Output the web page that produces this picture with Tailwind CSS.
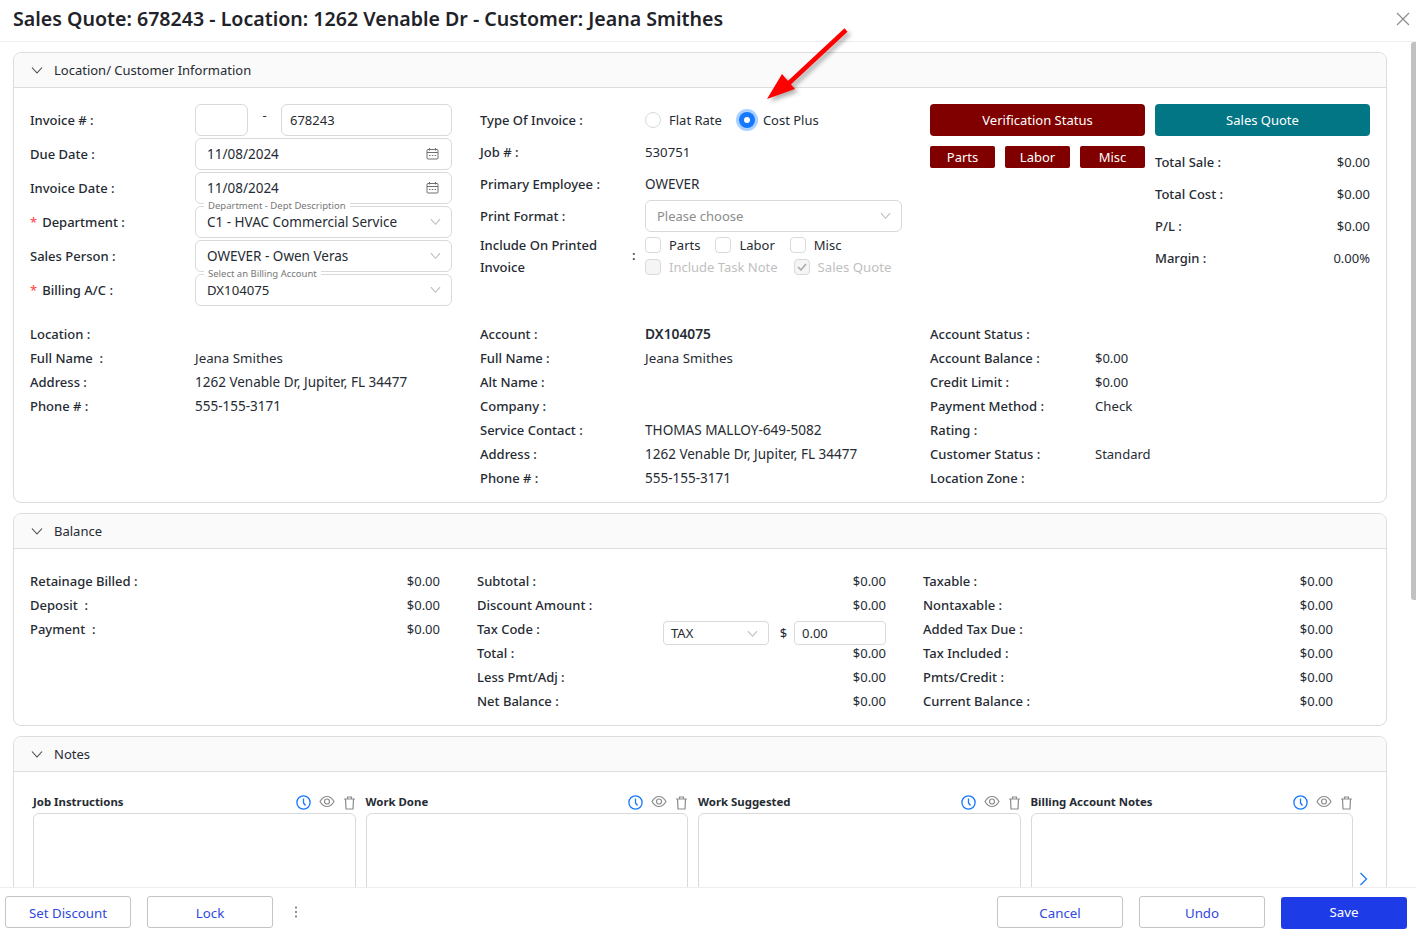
<!doctype html>
<html>

<head>
  <meta charset="UTF-8">
  <script src="https://cdn.jsdelivr.net/npm/@tailwindcss/browser@4"></script>
</head>

<body class="h-screen overflow-hidden bg-white text-[13px] text-[#262b33] font-['Noto_Sans',sans-serif]">
  <div class="relative flex flex-col h-[939px]">

    <!-- title bar -->
    <header class="flex items-center justify-between h-[42px] shrink-0 pl-[13px] pr-[6px] pb-[4px] border-b border-[#eeeeee]">
      <h1 class="text-[19.6px] font-semibold text-[#1f2329]">Sales Quote: 678243 - Location: 1262 Venable Dr - Customer: Jeana Smithes</h1>
      <svg class="w-[14px] h-[14px] text-[#8c8c8c]" viewBox="0 0 14 14" fill="none" stroke="currentColor" stroke-width="1.2"><path d="M1 1l12 12M13 1L1 13" /></svg>
    </header>

    <main class="flex-1 overflow-hidden px-[13px] pt-[10px] w-[1400px] flex flex-col gap-[10px]">

      <!-- location / customer -->
      <section class="shrink-0 h-[451px] border border-[#dddddd] rounded-[8px] overflow-hidden">
        <div class="flex items-center gap-[11px] h-[35px] pl-[17px] bg-[#fafafa] border-b border-[#dddddd]">
          <svg class="w-[12px] h-[12px]" viewBox="0 0 12 12" fill="none" stroke="#444" stroke-width="1.1"><path d="M1 3.5l5 5.5 5-5.5" /></svg>
          <span class="pt-[2px]">Location/ Customer Information</span>
        </div>
        <div class="pl-[16px] pt-[16px]">
          <div class="grid grid-cols-[422px_422px_440px] gap-x-[28px] h-[218px]">

            <!-- left fields -->
            <div class="flex flex-col gap-[2px]">
              <div class="flex items-center h-[32px]">
                <label class="w-[165px] pt-[2px] font-medium">Invoice # :</label>
                <div class="w-[53px] h-[32px] border border-[#d9d9d9] rounded-[6px]"></div>
                <span class="w-[33px] text-center -mt-[8px]">-</span>
                <div class="flex items-center w-[171px] h-[32px] pl-[8px] pt-[2px] border border-[#d9d9d9] rounded-[6px]">678243</div>
              </div>
              <div class="flex items-center h-[32px]">
                <label class="w-[165px] pt-[2px] font-medium">Due Date :</label>
                <div class="flex items-center justify-between w-[257px] h-[32px] pl-[11px] pr-[12px] border border-[#d9d9d9] rounded-[6px] text-[13.5px]">
                  <span>11/08/2024</span>
                  <svg class="w-[13px] h-[13px] -mt-[2px]" viewBox="0 0 13 13" fill="none" stroke="#6e6e6e" stroke-width="1"><rect x="1" y="2.5" width="11" height="9.5" rx="1" /><path d="M1 5.5h11M3.5 1v2.5M9.5 1v2.5M3 8.5h1.5M5.8 8.5h1.5M8.6 8.5h1.5" /></svg>
                </div>
              </div>
              <div class="flex items-center h-[32px]">
                <label class="w-[165px] pt-[2px] font-medium">Invoice Date :</label>
                <div class="flex items-center justify-between w-[257px] h-[32px] pl-[11px] pr-[12px] border border-[#d9d9d9] rounded-[6px] text-[13.5px]">
                  <span>11/08/2024</span>
                  <svg class="w-[13px] h-[13px] -mt-[2px]" viewBox="0 0 13 13" fill="none" stroke="#6e6e6e" stroke-width="1"><rect x="1" y="2.5" width="11" height="9.5" rx="1" /><path d="M1 5.5h11M3.5 1v2.5M9.5 1v2.5M3 8.5h1.5M5.8 8.5h1.5M8.6 8.5h1.5" /></svg>
                </div>
              </div>
              <div class="flex items-center h-[32px]">
                <label class="w-[165px] pt-[2px] font-medium"><span class="text-[#ff4d4f] mr-[5px]">*</span>Department :</label>
                <div class="relative flex items-center justify-between w-[257px] h-[32px] pl-[11px] pr-[10px] border border-[#d9d9d9] rounded-[6px] text-[13.5px]">
                  <span class="absolute left-[8px] -top-[7px] px-[4px] bg-white text-[9.5px] leading-[12px] text-[#777777]">Department - Dept Description</span>
                  <span>C1 - HVAC Commercial Service</span>
                  <svg class="w-[11px] h-[11px] -mt-[1px]" viewBox="0 0 12 12" fill="none" stroke="#bbb" stroke-width="1.1"><path d="M1 3.5l5 5.5 5-5.5" /></svg>
                </div>
              </div>
              <div class="flex items-center h-[32px]">
                <label class="w-[165px] pt-[2px] font-medium">Sales Person :</label>
                <div class="flex items-center justify-between w-[257px] h-[32px] pl-[11px] pr-[10px] border border-[#d9d9d9] rounded-[6px] text-[13.5px]">
                  <span>OWEVER - Owen Veras</span>
                  <svg class="w-[11px] h-[11px] -mt-[1px]" viewBox="0 0 12 12" fill="none" stroke="#bbb" stroke-width="1.1"><path d="M1 3.5l5 5.5 5-5.5" /></svg>
                </div>
              </div>
              <div class="flex items-center h-[32px]">
                <label class="w-[165px] pt-[2px] font-medium"><span class="text-[#ff4d4f] mr-[5px]">*</span>Billing A/C :</label>
                <div class="relative flex items-center justify-between w-[257px] h-[32px] pl-[11px] pr-[10px] pt-[2px] border border-[#d9d9d9] rounded-[6px] text-[13.2px]">
                  <span class="absolute left-[8px] -top-[7px] px-[4px] bg-white text-[9.5px] leading-[12px] text-[#777777]">Select an Billing Account</span>
                  <span>DX104075</span>
                  <svg class="w-[11px] h-[11px] -mt-[3px]" viewBox="0 0 12 12" fill="none" stroke="#bbb" stroke-width="1.1"><path d="M1 3.5l5 5.5 5-5.5" /></svg>
                </div>
              </div>
            </div>

            <!-- middle fields -->
            <div class="flex flex-col">
              <div class="flex items-center h-[32px]">
                <label class="w-[165px] pt-[2px] font-medium">Type Of Invoice :</label>
                <span class="w-[16px] h-[16px] rounded-full border border-[#d9d9d9]"></span>
                <span class="ml-[8px] pt-[2px]">Flat Rate</span>
                <span class="ml-[17px] flex items-center justify-center w-[16px] h-[16px] rounded-full bg-[#1677ff] ring-[3px] ring-[#a9d0ff]"><span class="w-[6px] h-[6px] rounded-full bg-white"></span></span>
                <span class="ml-[8px] pt-[2px]">Cost Plus</span>
              </div>
              <div class="flex items-center h-[32px] pt-[2px]">
                <label class="w-[165px] font-medium">Job # :</label>
                <span class="text-[13.2px]">530751</span>
              </div>
              <div class="flex items-center h-[32px]">
                <label class="w-[165px] pt-[2px] font-medium">Primary Employee :</label>
                <span class="text-[13.5px]">OWEVER</span>
              </div>
              <div class="flex items-center h-[32px]">
                <label class="w-[165px] pt-[2px] font-medium">Print Format :</label>
                <div class="flex items-center justify-between w-[257px] h-[32px] pl-[11px] pr-[10px] pt-[2px] border border-[#d9d9d9] rounded-[6px] text-[#8c8c8c]">
                  <span>Please choose</span>
                  <svg class="w-[11px] h-[11px] -mt-[3px]" viewBox="0 0 12 12" fill="none" stroke="#bbb" stroke-width="1.1"><path d="M1 3.5l5 5.5 5-5.5" /></svg>
                </div>
              </div>
              <div class="flex items-center mt-[2px] h-[44px]">
                <label class="w-[152px] font-medium leading-[22px]">Include On Printed Invoice</label>
                <span class="w-[13px] font-medium">:</span>
                <div class="flex flex-col">
                  <div class="flex items-center h-[22px]">
                    <span class="w-[16px] h-[16px] rounded-[4px] border border-[#d9d9d9]"></span>
                    <span class="ml-[8px] pt-[2px]">Parts</span>
                    <span class="ml-[15px] w-[16px] h-[16px] rounded-[4px] border border-[#d9d9d9]"></span>
                    <span class="ml-[8px] pt-[2px]">Labor</span>
                    <span class="ml-[15px] w-[16px] h-[16px] rounded-[4px] border border-[#d9d9d9]"></span>
                    <span class="ml-[8px] pt-[2px]">Misc</span>
                  </div>
                  <div class="flex items-center h-[22px] text-[#bfbfbf]">
                    <span class="w-[16px] h-[16px] rounded-[4px] border border-[#d9d9d9] bg-[#f5f5f5]"></span>
                    <span class="ml-[8px] pt-[2px]">Include Task Note</span>
                    <span class="ml-[16px] flex items-center justify-center w-[16px] h-[16px] rounded-[4px] border border-[#d9d9d9] bg-[#f5f5f5]">
                      <svg class="w-[10px] h-[10px]" viewBox="0 0 10 10" fill="none" stroke="#a6a6a6" stroke-width="1.5"><path d="M1 5l3 3 5-6" /></svg>
                    </span>
                    <span class="ml-[8px] pt-[2px] text-[13.2px]">Sales Quote</span>
                  </div>
                </div>
              </div>
            </div>

            <!-- status buttons and totals -->
            <div class="grid grid-cols-2 gap-x-[10px] content-start">
              <div>
                <div class="flex items-center justify-center h-[32px] pt-[2px] rounded-[4px] bg-[#800000] text-white">Verification Status</div>
                <div class="grid grid-cols-3 gap-x-[10px] mt-[10px]">
                  <div class="flex items-center justify-center h-[22px] pt-[2px] rounded-[2px] bg-[#800000] text-white">Parts</div>
                  <div class="flex items-center justify-center h-[22px] pt-[2px] rounded-[2px] bg-[#800000] text-white">Labor</div>
                  <div class="flex items-center justify-center h-[22px] pt-[2px] rounded-[2px] bg-[#800000] text-white">Misc</div>
                </div>
              </div>
              <div>
                <div class="flex items-center justify-center h-[32px] pt-[2px] rounded-[4px] bg-[#027685] text-white">Sales Quote</div>
                <div class="mt-[10px]">
                  <div class="flex items-center justify-between h-[32px] pt-[2px]"><label class="font-medium">Total Sale :</label><span>$0.00</span></div>
                  <div class="flex items-center justify-between h-[32px] pt-[2px]"><label class="font-medium">Total Cost :</label><span>$0.00</span></div>
                  <div class="flex items-center justify-between h-[32px] pt-[2px]"><label class="font-medium">P/L :</label><span>$0.00</span></div>
                  <div class="flex items-center justify-between h-[32px] pt-[2px]"><label class="font-medium">Margin :</label><span>0.00%</span></div>
                </div>
              </div>
            </div>
          </div>

          <!-- account details -->
          <div class="grid grid-cols-[422px_422px_440px] gap-x-[28px] leading-[24px]">
            <div class="grid grid-cols-[165px_1fr] content-start">
              <label class="font-medium">Location :</label><span></span>
              <label class="font-medium">Full Name&nbsp; :</label><span class="text-[13.3px]">Jeana Smithes</span>
              <label class="font-medium">Address :</label><span class="text-[13.5px]">1262 Venable Dr, Jupiter, FL 34477</span>
              <label class="font-medium">Phone # :</label><span class="text-[13.5px]">555-155-3171</span>
            </div>
            <div class="grid grid-cols-[165px_1fr] content-start">
              <label class="font-medium">Account :</label><span class="text-[13.8px] font-semibold">DX104075</span>
              <label class="font-medium">Full Name :</label><span class="text-[13.3px]">Jeana Smithes</span>
              <label class="font-medium">Alt Name :</label><span></span>
              <label class="font-medium">Company :</label><span></span>
              <label class="font-medium">Service Contact :</label><span class="text-[13.6px]">THOMAS MALLOY-649-5082</span>
              <label class="font-medium">Address :</label><span class="text-[13.5px]">1262 Venable Dr, Jupiter, FL 34477</span>
              <label class="font-medium">Phone # :</label><span class="text-[13.5px]">555-155-3171</span>
            </div>
            <div class="grid grid-cols-[165px_1fr] content-start">
              <label class="font-medium">Account Status :</label><span></span>
              <label class="font-medium">Account Balance :</label><span>$0.00</span>
              <label class="font-medium">Credit Limit :</label><span>$0.00</span>
              <label class="font-medium">Payment Method :</label><span class="text-[13.2px]">Check</span>
              <label class="font-medium">Rating :</label><span></span>
              <label class="font-medium">Customer Status :</label><span>Standard</span>
              <label class="font-medium">Location Zone :</label><span></span>
            </div>
          </div>
        </div>
      </section>

      <!-- balance -->
      <section class="shrink-0 h-[213px] border border-[#dddddd] rounded-[8px] overflow-hidden">
        <div class="flex items-center gap-[11px] h-[35px] pl-[17px] bg-[#fafafa] border-b border-[#dddddd]">
          <svg class="w-[12px] h-[12px]" viewBox="0 0 12 12" fill="none" stroke="#444" stroke-width="1.1"><path d="M1 3.5l5 5.5 5-5.5" /></svg>
          <span class="pt-[2px]">Balance</span>
        </div>
        <div class="grid grid-cols-[410px_409px_410px] gap-x-[37px] pl-[16px] pt-[20px] leading-[24px]">
          <div>
            <div class="flex justify-between"><label class="font-medium">Retainage Billed :</label><span>$0.00</span></div>
            <div class="flex justify-between"><label class="font-medium">Deposit&nbsp; :</label><span>$0.00</span></div>
            <div class="flex justify-between"><label class="font-medium">Payment&nbsp; :</label><span>$0.00</span></div>
          </div>
          <div>
            <div class="flex justify-between"><label class="font-medium">Subtotal :</label><span>$0.00</span></div>
            <div class="flex justify-between"><label class="font-medium">Discount Amount :</label><span>$0.00</span></div>
            <div class="flex h-[24px]">
              <label class="w-[186px] font-medium">Tax Code :</label>
              <div class="flex items-center justify-between w-[106px] h-[24px] mt-[4px] pl-[7px] pr-[10px] border border-[#d9d9d9] rounded-[4px] bg-white">
                <span>TAX</span>
                <svg class="w-[11px] h-[11px]" viewBox="0 0 12 12" fill="none" stroke="#bbb" stroke-width="1.1"><path d="M1 3.5l5 5.5 5-5.5" /></svg>
              </div>
              <span class="w-[25px] mt-[4px] pl-[4px] text-center">$</span>
              <div class="flex items-center w-[92px] h-[24px] mt-[4px] pl-[7px] border border-[#d9d9d9] rounded-[4px] bg-white">0.00</div>
            </div>
            <div class="flex justify-between"><label class="font-medium">Total :</label><span>$0.00</span></div>
            <div class="flex justify-between"><label class="font-medium">Less Pmt/Adj :</label><span>$0.00</span></div>
            <div class="flex justify-between"><label class="font-medium">Net Balance :</label><span>$0.00</span></div>
          </div>
          <div>
            <div class="flex justify-between"><label class="font-medium">Taxable :</label><span>$0.00</span></div>
            <div class="flex justify-between"><label class="font-medium">Nontaxable :</label><span>$0.00</span></div>
            <div class="flex justify-between"><label class="font-medium">Added Tax Due :</label><span>$0.00</span></div>
            <div class="flex justify-between"><label class="font-medium">Tax Included :</label><span>$0.00</span></div>
            <div class="flex justify-between"><label class="font-medium">Pmts/Credit :</label><span>$0.00</span></div>
            <div class="flex justify-between"><label class="font-medium">Current Balance :</label><span>$0.00</span></div>
          </div>
        </div>
      </section>

      <!-- notes -->
      <section class="relative shrink-0 h-[300px] border border-[#dddddd] rounded-[8px] overflow-hidden">
        <div class="flex items-center gap-[11px] h-[35px] pl-[17px] bg-[#fafafa] border-b border-[#dddddd]">
          <svg class="w-[12px] h-[12px]" viewBox="0 0 12 12" fill="none" stroke="#444" stroke-width="1.1"><path d="M1 3.5l5 5.5 5-5.5" /></svg>
          <span class="pt-[2px]">Notes</span>
        </div>
        <div class="grid grid-cols-4 gap-x-[10px] w-[1320px] ml-[19px] mt-[20px]">
          <div>
            <div class="flex items-center justify-between h-[21px]">
              <span class="pb-[2px] text-[11.4px] font-bold">Job Instructions</span>
              <div class="flex items-center gap-[8px]">
                <svg class="w-[15px] h-[15px]" viewBox="0 0 15 15" fill="none" stroke="#1677ff" stroke-width="1.3"><circle cx="7.5" cy="7.5" r="6.6" /><path d="M7.5 3.5V8l2 2.5" /></svg>
                <svg class="w-[16px] h-[13px] -mt-[2px]" viewBox="0 0 16 13" fill="none" stroke="#8c8c8c" stroke-width="1.2"><path d="M1 6.5C3 3 5.5 1.5 8 1.5S13 3 15 6.5C13 10 10.5 11.5 8 11.5S3 10 1 6.5Z" /><circle cx="8" cy="6.5" r="2.5" /></svg>
                <svg class="w-[13px] h-[14px]" viewBox="0 0 13 14" fill="none" stroke="#8c8c8c" stroke-width="1.2"><path d="M1 3h11M4.5 3V1h4v2M2.5 3l.5 10h7l.5-10" /></svg>
              </div>
            </div>
            <div class="h-[140px] border border-[#d9d9d9] rounded-[6px]"></div>
          </div>
          <div>
            <div class="flex items-center justify-between h-[21px]">
              <span class="pb-[2px] text-[11.4px] font-bold">Work Done</span>
              <div class="flex items-center gap-[8px]">
                <svg class="w-[15px] h-[15px]" viewBox="0 0 15 15" fill="none" stroke="#1677ff" stroke-width="1.3"><circle cx="7.5" cy="7.5" r="6.6" /><path d="M7.5 3.5V8l2 2.5" /></svg>
                <svg class="w-[16px] h-[13px] -mt-[2px]" viewBox="0 0 16 13" fill="none" stroke="#8c8c8c" stroke-width="1.2"><path d="M1 6.5C3 3 5.5 1.5 8 1.5S13 3 15 6.5C13 10 10.5 11.5 8 11.5S3 10 1 6.5Z" /><circle cx="8" cy="6.5" r="2.5" /></svg>
                <svg class="w-[13px] h-[14px]" viewBox="0 0 13 14" fill="none" stroke="#8c8c8c" stroke-width="1.2"><path d="M1 3h11M4.5 3V1h4v2M2.5 3l.5 10h7l.5-10" /></svg>
              </div>
            </div>
            <div class="h-[140px] border border-[#d9d9d9] rounded-[6px]"></div>
          </div>
          <div>
            <div class="flex items-center justify-between h-[21px]">
              <span class="pb-[2px] text-[11.4px] font-bold">Work Suggested</span>
              <div class="flex items-center gap-[8px]">
                <svg class="w-[15px] h-[15px]" viewBox="0 0 15 15" fill="none" stroke="#1677ff" stroke-width="1.3"><circle cx="7.5" cy="7.5" r="6.6" /><path d="M7.5 3.5V8l2 2.5" /></svg>
                <svg class="w-[16px] h-[13px] -mt-[2px]" viewBox="0 0 16 13" fill="none" stroke="#8c8c8c" stroke-width="1.2"><path d="M1 6.5C3 3 5.5 1.5 8 1.5S13 3 15 6.5C13 10 10.5 11.5 8 11.5S3 10 1 6.5Z" /><circle cx="8" cy="6.5" r="2.5" /></svg>
                <svg class="w-[13px] h-[14px]" viewBox="0 0 13 14" fill="none" stroke="#8c8c8c" stroke-width="1.2"><path d="M1 3h11M4.5 3V1h4v2M2.5 3l.5 10h7l.5-10" /></svg>
              </div>
            </div>
            <div class="h-[140px] border border-[#d9d9d9] rounded-[6px]"></div>
          </div>
          <div>
            <div class="flex items-center justify-between h-[21px]">
              <span class="pb-[2px] text-[11.4px] font-bold">Billing Account Notes</span>
              <div class="flex items-center gap-[8px]">
                <svg class="w-[15px] h-[15px]" viewBox="0 0 15 15" fill="none" stroke="#1677ff" stroke-width="1.3"><circle cx="7.5" cy="7.5" r="6.6" /><path d="M7.5 3.5V8l2 2.5" /></svg>
                <svg class="w-[16px] h-[13px] -mt-[2px]" viewBox="0 0 16 13" fill="none" stroke="#8c8c8c" stroke-width="1.2"><path d="M1 6.5C3 3 5.5 1.5 8 1.5S13 3 15 6.5C13 10 10.5 11.5 8 11.5S3 10 1 6.5Z" /><circle cx="8" cy="6.5" r="2.5" /></svg>
                <svg class="w-[13px] h-[14px]" viewBox="0 0 13 14" fill="none" stroke="#8c8c8c" stroke-width="1.2"><path d="M1 3h11M4.5 3V1h4v2M2.5 3l.5 10h7l.5-10" /></svg>
              </div>
            </div>
            <div class="h-[140px] border border-[#d9d9d9] rounded-[6px]"></div>
          </div>
        </div>
        <svg class="absolute left-[1345px] top-[135px] w-[9px] h-[14px]" viewBox="0 0 9 14" fill="none" stroke="#1677ff" stroke-width="1.3"><path d="M1.5 1l6 6-6 6" /></svg>
      </section>
    </main>

    <!-- footer -->
    <footer class="flex items-center justify-between h-[52px] shrink-0 pl-[5px] pr-[9px] pb-[3px] bg-white border-t border-[#eeeeee] z-10">
      <div class="flex items-center">
        <button class="w-[126px] h-[32px] pt-[3px] rounded-[3px] border border-[#c4c4c4] text-[13.3px] text-[#3048e0]">Set Discount</button>
        <button class="w-[126px] h-[32px] pt-[3px] ml-[16px] rounded-[3px] border border-[#c4c4c4] text-[13.3px] text-[#3048e0]">Lock</button>
        <svg class="w-[4px] h-[14px] ml-[21px] text-[#666]" viewBox="0 0 4 14" fill="currentColor"><circle cx="2" cy="2.5" r="1" /><circle cx="2" cy="7" r="1" /><circle cx="2" cy="11.5" r="1" /></svg>
      </div>
      <div class="flex items-center gap-[16px]">
        <button class="w-[126px] h-[32px] pt-[3px] rounded-[3px] border border-[#c4c4c4] text-[13.3px] text-[#3048e0]">Cancel</button>
        <button class="w-[126px] h-[32px] pt-[3px] rounded-[3px] border border-[#c4c4c4] text-[13.3px] text-[#3048e0]">Undo</button>
        <button class="w-[126px] h-[32px] mt-[1px] pt-[1px] rounded-[3px] bg-[#1d3ce8] text-[13.3px] text-white">Save</button>
      </div>
    </footer>

    <!-- scrollbar thumb -->
    <div class="absolute left-[1411px] top-[42px] w-[5px] h-[558px] rounded-l-[3px] bg-[#c1c1c1]"></div>

    <!-- red annotation arrow -->
    <svg class="absolute left-[760px] top-[22px] w-[100px] h-[90px] drop-shadow-[3px_3px_2px_rgba(0,0,0,0.3)]" viewBox="0 0 100 90">
      <path d="M86 8L28 62" stroke="#ff0000" stroke-width="4.5" fill="none" />
      <path d="M7 77L22 52L35 67Z" fill="#ff0000" />
    </svg>
  </div>
</body>

</html>
